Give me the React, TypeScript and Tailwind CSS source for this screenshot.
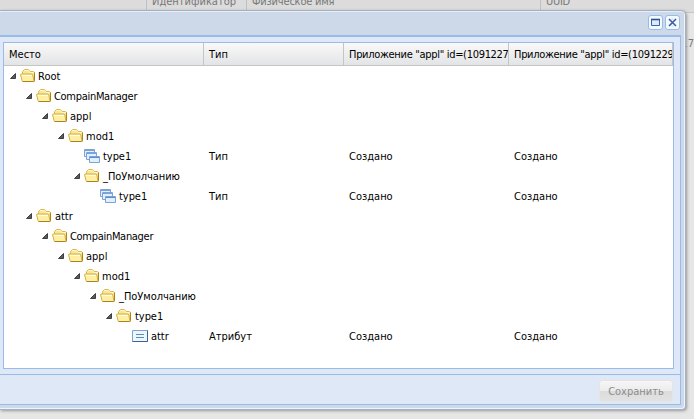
import type { ReactNode } from "react";

type Kind = "folder" | "type" | "attr";
type Row = { depth: number; kind: Kind; name: string; style?: string; type?: string };

const rows: Row[] = [
  { depth: 0, kind: "folder", name: "Root", style: "pl-[2px]" },
  { depth: 1, kind: "folder", name: "CompainManager", style: "pl-[2px] tracking-[-0.3px]" },
  { depth: 2, kind: "folder", name: "appl", style: "pl-[2px]" },
  { depth: 3, kind: "folder", name: "mod1", style: "pl-[2px]" },
  { depth: 4, kind: "type", name: "type1", type: "Тип" },
  { depth: 4, kind: "folder", name: "_ПоУмолчанию" },
  { depth: 5, kind: "type", name: "type1", type: "Тип" },
  { depth: 1, kind: "folder", name: "attr" },
  { depth: 2, kind: "folder", name: "CompainManager", style: "pl-[2px] tracking-[-0.3px]" },
  { depth: 3, kind: "folder", name: "appl", style: "pl-[2px]" },
  { depth: 4, kind: "folder", name: "mod1", style: "pl-[2px]" },
  { depth: 5, kind: "folder", name: "_ПоУмолчанию" },
  { depth: 6, kind: "folder", name: "type1" },
  { depth: 7, kind: "attr", name: "attr", type: "Атрибут" },
];

function FolderIcon() {
  return (
    <svg width="16" height="16" viewBox="0 0 16 16" className="shrink-0">
      <path d="M2.500 12V3.500l2-2h4l1.500 2h3.500l1 1v9H3z" fill="#f8e596" stroke="#dcb94e" />
      <path d="M4 2.500h4.500l1.500 2h3.500" fill="none" stroke="#fff8cf" />
      <path d="M.5 6.500l.5-.5h11l.8.8 1 5.700-.8 1H3l-1-1z" fill="#fdf0a6" stroke="#d9b040" />
      <path d="M2 7.500h10" stroke="#fffde0" />
      <path d="M2.500 13.500h11l1-1V4.500" fill="none" stroke="#ab831c" />
    </svg>
  );
}

function TypeIcon() {
  return (
    <svg width="16" height="16" viewBox="0 0 16 16" className="shrink-0" fill="#e3effc" stroke="#7ba3d8">
      <path d="M.5 1.500h10v7H.5z" />
      <path d="M1 2.500h9" />
      <path d="M2.500 4.500h10v7h-10z" />
      <path d="M3 5.500h9" />
      <path d="M5.500 8.500h10v6h-10z" />
      <path d="M6 9.500h9" stroke="#5c8dce" />
    </svg>
  );
}

function AttrIcon() {
  return (
    <svg width="16" height="16" viewBox="0 0 16 16" className="shrink-0">
      <path d="M.5 2.500h15v11H.5z" fill="#eef6fd" stroke="#7ba3cf" />
      <path d="M.5 13.500h15v-11" fill="none" stroke="#3a6591" />
      <path d="M4 6.500h8M4 9.500h8" stroke="#6189b5" />
    </svg>
  );
}

function Arrow() {
  return (
    <svg width="16" height="16" viewBox="0 0 16 16" className="shrink-0">
      <path d="M11.500 5.500v5h-5z" fill="#5a5a5a" stroke="#333" strokeWidth=".9" />
    </svg>
  );
}

function HeadCell({ className, children }: { className: string; children: ReactNode }) {
  return <div className={`h-[22px] shrink-0 overflow-hidden pl-[5px] leading-[23px] whitespace-nowrap ${className}`}>{children}</div>;
}

function ToolButton({ children }: { children: ReactNode }) {
  return (
    <div className="flex size-[15px] items-center justify-center rounded-[3px] border border-[#99bbe8] bg-[#f4f9ff]">
      {children}
    </div>
  );
}

export default function App() {
  return (
    <div className="relative h-[419px] w-[694px] overflow-hidden bg-[#e6e6e6] font-['DejaVu_Sans_Condensed','DejaVu_Sans',sans-serif] text-[11px] [font-stretch:condensed] text-black">
      <div className="flex h-[13px] border-b border-[#c5c5c5] bg-[#dcdcdc] leading-[14px] text-[#777]">
        <div className="w-[147px] shrink-0 border-r border-[#c0c0c0]" />
        <div className="w-[100px] shrink-0 border-r border-[#c0c0c0] pl-[5px]"><div className="-mt-[5px]">Идентификатор</div></div>
        <div className="w-[294px] shrink-0 border-r border-[#c0c0c0] pl-[5px] tracking-[-0.2px]"><div className="-mt-[5px]">Физическое имя</div></div>
        <div className="-mt-[5px] pl-[5px] tracking-[-0.3px]">UUID</div>
      </div>
      <div className="flex justify-end pt-[24px] leading-[14px] text-[#777]">17</div>

      <div className="absolute top-[10px] left-0 flex h-[400px] w-[686px] flex-col rounded-tr-[5px] rounded-br-[4px] border-t border-r border-b border-[#a2b1c5] bg-[#cdd9e8] pr-[4px] pb-[4px] shadow-[1px_1px_3px_#999,inset_-1px_-1px_0_#f0f4fa,inset_0_1px_0_#e8eef6]">
        <div className="flex h-[24px] shrink-0 items-start justify-end gap-[2px] pt-[4px] pr-px">
          <ToolButton>
            <svg width="11" height="11" viewBox="0 0 11 11"><path d="M1.500 2.500h8v6h-8z" fill="#dcebff" stroke="#3c62ad" /><path d="M1 2.500h9" stroke="#28509f" strokeWidth="1.600" /></svg>
          </ToolButton>
          <ToolButton>
            <svg width="11" height="11" viewBox="0 0 11 11"><path d="M2 2l7 7M9 2L2 9" stroke="#3c5ea0" strokeWidth="1.600" /><path d="M4.500 2h2M4.500 9h2" stroke="#bcd8fb" /></svg>
          </ToolButton>
        </div>
        <div className="flex min-h-0 grow flex-col border-t-2 border-r border-b border-[#99bbe8] bg-[#dfe8f6]">
          <div className="flex h-[338px] flex-col border-b border-[#99bbe8] pt-[5px] pr-[6px] pb-[5px] pl-[3px]">
            <div className="min-h-0 w-[671px] grow border border-[#99bbe8] bg-white">
              <div className="flex h-[23px] w-[669px] overflow-hidden border-b border-[#c5c5c5] bg-gradient-to-b from-[#f9f9f9] to-[#e3e4e6]">
                <HeadCell className="w-[200px] border-r border-[#c5c5c5]">Место</HeadCell>
                <HeadCell className="w-[140px] border-r border-[#c5c5c5]">Тип</HeadCell>
                <HeadCell className="w-[165px] border-r border-[#c5c5c5] tracking-[-0.31px]">Приложение "appl" id=(1091227</HeadCell>
                <HeadCell className="w-[164px] border-r border-[#c5c5c5] tracking-[-0.31px]">Приложение "appl" id=(1091229</HeadCell>
              </div>
              {rows.map((r, i) => (
                <div key={i} className="flex h-[20px] items-center leading-[20px] whitespace-nowrap">
                  <div className="flex w-[205px] shrink-0 items-center">
                    <div className="shrink-0" style={{ width: r.depth * 16 }} />
                    {r.kind === "folder" ? <Arrow /> : <div className="w-[16px] shrink-0" />}
                    {r.kind === "folder" ? <FolderIcon /> : r.kind === "type" ? <TypeIcon /> : <AttrIcon />}
                    <span className={`pt-px ${r.style ?? "pl-[3px] tracking-[-0.05px]"}`}>{r.name}</span>
                  </div>
                  <div className="w-[140px] shrink-0 pt-px">{r.type}</div>
                  <div className="w-[165px] shrink-0 pt-px">{r.type && "Создано"}</div>
                  <div className="pt-px">{r.type && "Создано"}</div>
                </div>
              ))}
            </div>
          </div>
          <div className="flex grow items-start justify-end pt-[5px] pr-[7px]">
            <div className="h-[22px] w-[74px] rounded-[3px] border border-[#e4e4e4] bg-[linear-gradient(#f6f6f6,#ececec_48%,#dcdcdc_52%,#e2e2e2)] text-center text-[11px] leading-[21px] text-[#8c8c8c]">Сохранить</div>
          </div>
        </div>
      </div>
    </div>
  );
}
